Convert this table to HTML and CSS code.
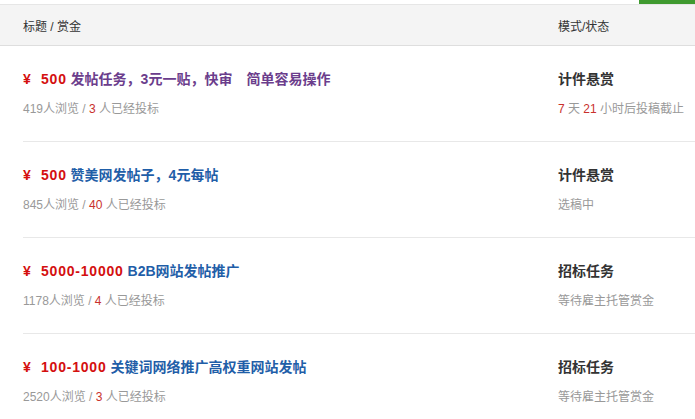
FILE: index.html
```
<!DOCTYPE html>
<html lang="zh-CN">

<head>
    <meta charset="UTF-8">
    <meta name="viewport" content="width=device-width, initial-scale=1.0">
    <title>任务列表</title>
    <link rel="stylesheet" href="styles.css">
</head>

<body>
    <div class="topbar">
        <span class="tab-on"></span>
    </div>

    <div class="task-head">
        <span>标题 / 赏金</span>
        <span>模式/状态</span>
    </div>

    <ul class="task-list">
        <li class="task">
            <div class="info">
                <a class="title visited" href="#"><em>¥&nbsp; 500</em> 发帖任务，3元一贴，快审　简单容易操作</a>
                <p class="meta">419人浏览 / <b>3</b> 人已经投标</p>
            </div>
            <div class="state">
                <strong>计件悬赏</strong>
                <p class="meta"><b>7</b> 天 <b>21</b> 小时后投稿截止</p>
            </div>
        </li>
        <li class="task">
            <div class="info">
                <a class="title" href="#"><em>¥&nbsp; 500</em> 赞美网发帖子，4元每帖</a>
                <p class="meta">845人浏览 / <b>40</b> 人已经投标</p>
            </div>
            <div class="state">
                <strong>计件悬赏</strong>
                <p class="meta">选稿中</p>
            </div>
        </li>
        <li class="task">
            <div class="info">
                <a class="title" href="#"><em>¥&nbsp; 5000-10000</em> B2B网站发帖推广</a>
                <p class="meta">1178人浏览 / <b>4</b> 人已经投标</p>
            </div>
            <div class="state">
                <strong>招标任务</strong>
                <p class="meta">等待雇主托管赏金</p>
            </div>
        </li>
        <li class="task">
            <div class="info">
                <a class="title" href="#"><em>¥&nbsp; 100-1000</em> 关键词网络推广高权重网站发帖</a>
                <p class="meta">2520人浏览 / <b>3</b> 人已经投标</p>
            </div>
            <div class="state">
                <strong>招标任务</strong>
                <p class="meta">等待雇主托管赏金</p>
            </div>
        </li>
    </ul>
</body>

</html>
```
FILE: styles.css
```
body {
    margin: 0;
    font-family: "Liberation Sans", "Noto Sans CJK SC", sans-serif;
    color: #333;
    background: #fff;
}

.topbar {
    height: 4px;
    display: flex;
    justify-content: flex-end;
}

.tab-on {
    width: 56px;
    background: #3f9a2f;
}

.task-head {
    display: grid;
    grid-template-columns: 1fr 137px;
    height: 40px;
    align-items: center;
    padding-left: 23px;
    background: #f4f4f4;
    border-top: 1px solid #e6e6e6;
    border-bottom: 1px solid #dedede;
    font-size: 12px;
    color: #333;
}

.task-list {
    list-style: none;
    margin: 0;
    padding: 0 0 0 23px;
}

.task {
    display: grid;
    grid-template-columns: 1fr 137px;
    padding: 23px 0 22px;
    border-bottom: 1px solid #e8e8e8;
}

.title,
.state strong {
    display: block;
    font-size: 14px;
    line-height: 20px;
    font-weight: bold;
    text-decoration: none;
    white-space: nowrap;
}

.title {
    color: #1f5ea8;
}

.title.visited {
    color: #6b3d8c;
}

.title em {
    font-style: normal;
    letter-spacing: 0.8px;
    color: #d40f0f;
}

.state strong {
    color: #333;
}

.meta {
    margin: 10px 0 0;
    font-size: 12px;
    line-height: 20px;
    color: #999;
    white-space: nowrap;
}

.meta b {
    font-weight: normal;
    color: #c9302c;
}
```
